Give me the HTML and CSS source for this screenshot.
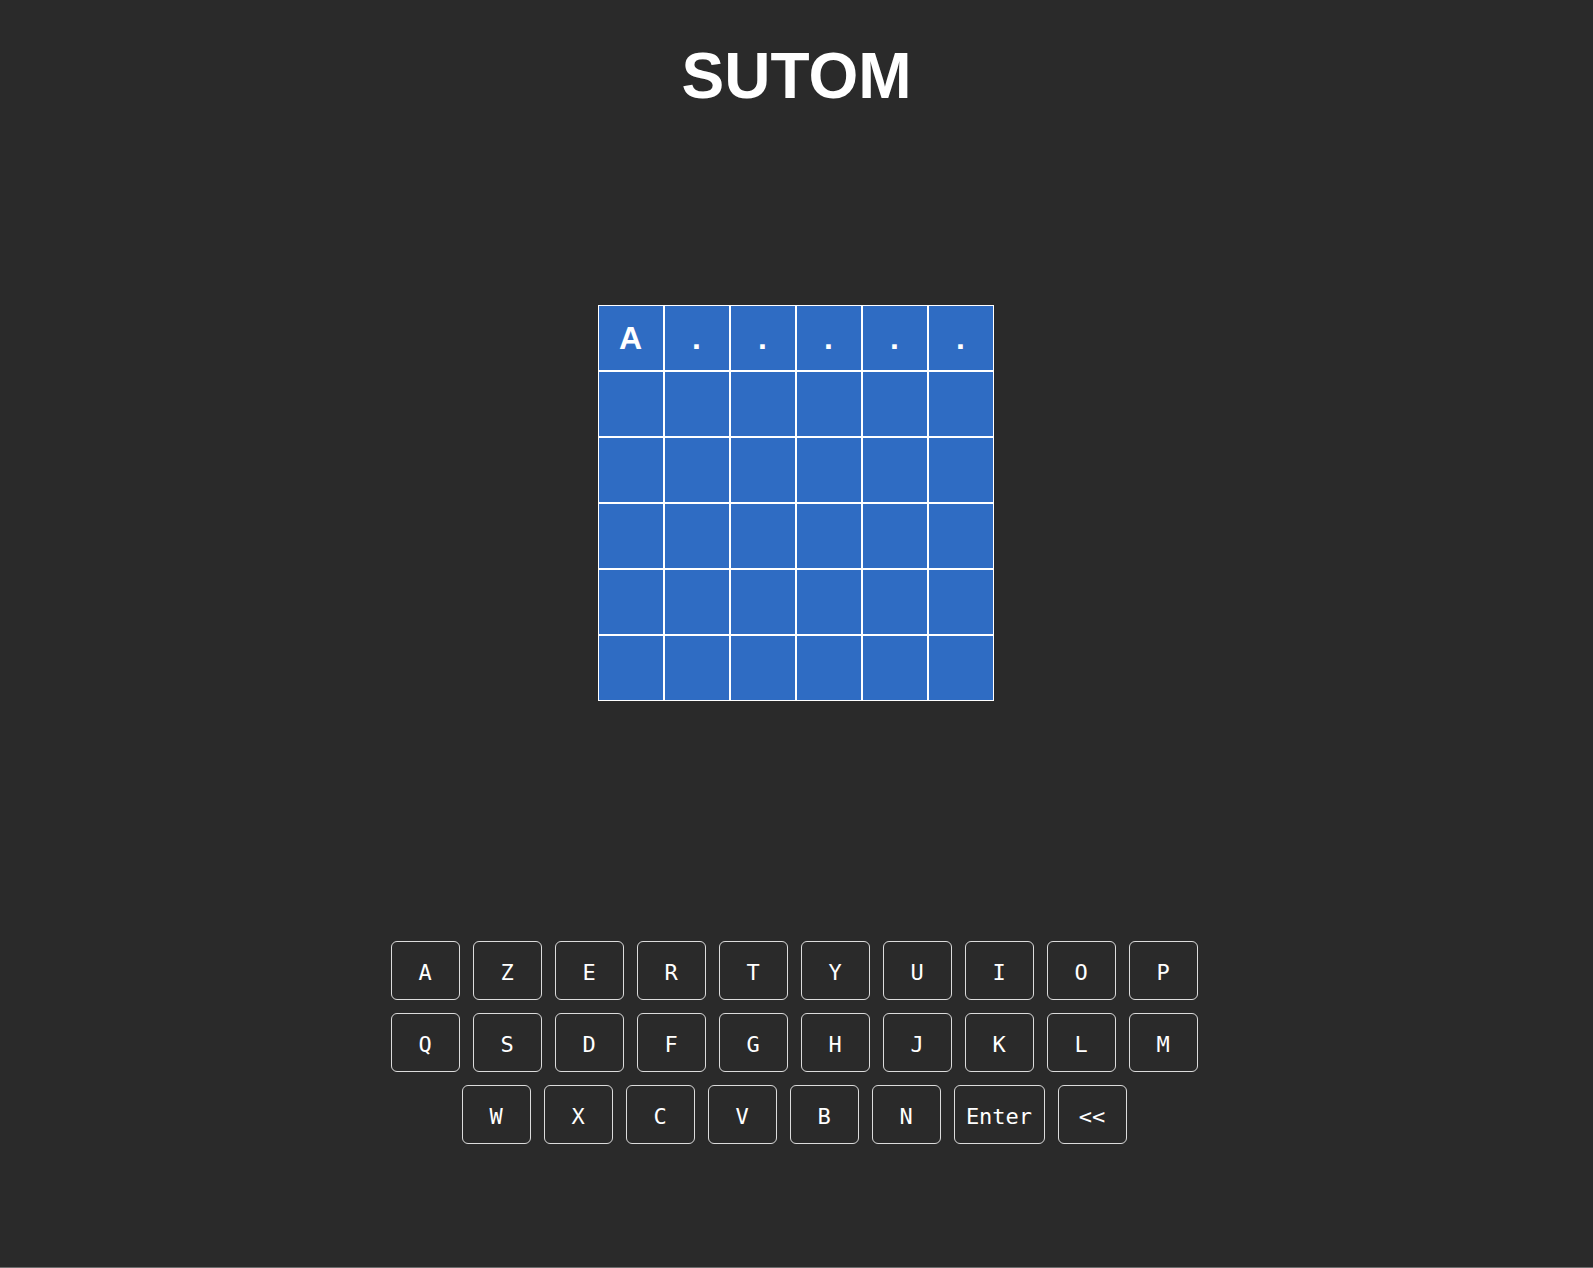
FILE: index.html
```html
<!DOCTYPE html>
<html lang="fr">
<head>
<meta charset="utf-8">
<title>SUTOM</title>
<link rel="stylesheet" href="styles.css">
</head>
<body>
<main class="app">
  <h1 class="title">SUTOM</h1>
  <div class="board">
    <div class="cell">A</div><div class="cell">.</div><div class="cell">.</div><div class="cell">.</div><div class="cell">.</div><div class="cell">.</div>
    <div class="cell"></div><div class="cell"></div><div class="cell"></div><div class="cell"></div><div class="cell"></div><div class="cell"></div>
    <div class="cell"></div><div class="cell"></div><div class="cell"></div><div class="cell"></div><div class="cell"></div><div class="cell"></div>
    <div class="cell"></div><div class="cell"></div><div class="cell"></div><div class="cell"></div><div class="cell"></div><div class="cell"></div>
    <div class="cell"></div><div class="cell"></div><div class="cell"></div><div class="cell"></div><div class="cell"></div><div class="cell"></div>
    <div class="cell"></div><div class="cell"></div><div class="cell"></div><div class="cell"></div><div class="cell"></div><div class="cell"></div>
  </div>
  <div class="keyboard">
    <div class="row">
      <button class="key">A</button><button class="key">Z</button><button class="key">E</button><button class="key">R</button><button class="key">T</button><button class="key">Y</button><button class="key">U</button><button class="key">I</button><button class="key">O</button><button class="key">P</button>
    </div>
    <div class="row">
      <button class="key">Q</button><button class="key">S</button><button class="key">D</button><button class="key">F</button><button class="key">G</button><button class="key">H</button><button class="key">J</button><button class="key">K</button><button class="key">L</button><button class="key">M</button>
    </div>
    <div class="row">
      <button class="key">W</button><button class="key">X</button><button class="key">C</button><button class="key">V</button><button class="key">B</button><button class="key">N</button><button class="key key-wide">Enter</button><button class="key">&lt;&lt;</button>
    </div>
  </div>
</main>
</body>
</html>
```

FILE: styles.css
```css
html, body {
  margin: 0;
  padding: 0;
}

body {
  background: #2a2a2a;
  min-height: 100vh;
  box-sizing: border-box;
  border-bottom: 1px solid #6e6e6e;
  font-family: "Liberation Sans", Arial, sans-serif;
  color: #ffffff;
}

.app {
  display: flex;
  flex-direction: column;
  align-items: center;
}

.title {
  margin: 0;
  padding-top: 39px;
  font-family: "Liberation Sans", Arial, sans-serif;
  font-weight: bold;
  font-size: 64px;
  line-height: 74px;
  color: #ffffff;
}

.board {
  margin-top: 192px;
  margin-right: 2px;
  display: grid;
  grid-template-columns: repeat(6, 66px);
  grid-auto-rows: 66px;
}

.cell {
  box-sizing: border-box;
  border: 1px solid #ffffff;
  background: #2f6cc3;
  display: flex;
  align-items: center;
  justify-content: center;
  font-family: "Liberation Sans", Arial, sans-serif;
  font-weight: bold;
  font-size: 32px;
  color: #ffffff;
}

.keyboard {
  margin-top: 240px;
  display: flex;
  flex-direction: column;
  align-items: center;
  gap: 13px;
  padding-right: 5px;
}

.row {
  display: flex;
  gap: 13px;
}

.key {
  box-sizing: border-box;
  width: 69px;
  height: 59px;
  margin: 0;
  padding: 3px 0 0 0;
  background: #2a2a2a;
  border: 1px solid #dcdcdc;
  border-radius: 6px;
  color: #ffffff;
  font-family: "DejaVu Sans Mono", monospace;
  font-size: 22px;
  display: flex;
  align-items: center;
  justify-content: center;
}

.key-wide {
  width: 91px;
}
```
